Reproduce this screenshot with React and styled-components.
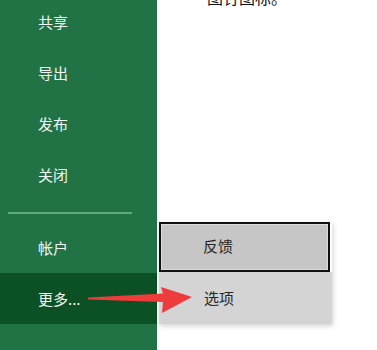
import React from "react";
import styled, { createGlobalStyle } from "styled-components";

const Global = createGlobalStyle`
  html, body { margin: 0; padding: 0; background: #fff; overflow: hidden; }
  body { font-family: "Noto Sans CJK SC", "Noto Sans", sans-serif; }
`;

const Page = styled.div`
  position: relative;
  display: flex;
  width: 377px;
  height: 350px;
  overflow: hidden;
`;

const Sidebar = styled.nav`
  width: 157px;
  flex-shrink: 0;
  background: #217346;
  display: flex;
  flex-direction: column;
`;

const NavList = styled.div`
  display: flex;
  flex-direction: column;
  margin-top: -4px;
`;

const NavItem = styled.div`
  height: 51px;
  display: flex;
  align-items: center;
  padding-left: 38px;
  font-size: 15px;
  color: #f2f7f2;
  background: ${(p) => (p.$active ? "#0b5125" : "transparent")};
`;

const Divider = styled.div`
  height: 1.5px;
  margin: 12px 25px 8px 8px;
  background: #5cab78;
`;

const Main = styled.main`
  flex: 1;
  background: #fff;
  padding-left: 50px;
`;

const Clipped = styled.div`
  margin-top: -12px;
  font-size: 16px;
  color: #111;
  line-height: 19px;
`;

const Popup = styled.div`
  position: absolute;
  left: 159px;
  top: 222px;
  width: 173px;
  display: flex;
  flex-direction: column;
  align-items: flex-start;
  box-shadow: 1px 2px 5px rgba(0, 0, 0, 0.18);
`;

const PopItem = styled.div`
  box-sizing: border-box;
  width: ${(p) => (p.$focused ? "171px" : "173px")};
  height: ${(p) => (p.$focused ? "50px" : "52px")};
  display: flex;
  align-items: center;
  padding-left: ${(p) => (p.$focused ? "42px" : "45px")};
  padding-bottom: ${(p) => (p.$focused ? "4px" : "2px")};
  font-size: 15px;
  color: #262626;
  background: ${(p) => (p.$focused ? "#c6c6c6" : "#d4d4d4")};
  border: ${(p) => (p.$focused ? "2.5px solid #111" : "none")};
  box-shadow: ${(p) => (p.$focused ? "inset 0 0 0 1px #dcdcdc" : "none")};
`;

const ArrowSvg = styled.svg`
  position: absolute;
  left: 0;
  top: 0;
  pointer-events: none;
`;

export default function App() {
  return (
    <>
      <Global />
      <Page>
        <Sidebar>
          <NavList>
            <NavItem>共享</NavItem>
            <NavItem>导出</NavItem>
            <NavItem>发布</NavItem>
            <NavItem>关闭</NavItem>
            <Divider />
            <NavItem>帐户</NavItem>
            <NavItem $active>更多...</NavItem>
          </NavList>
        </Sidebar>
        <Main>
          <Clipped>图钉图标。</Clipped>
        </Main>
        <Popup>
          <PopItem $focused>反馈</PopItem>
          <PopItem>选项</PopItem>
        </Popup>
        <ArrowSvg width="377" height="350" viewBox="0 0 377 350">
          <polygon
            points="88,297.5 163,293.5 161,287 192,297 162,313 163,302 88,299.5"
            fill="#ee3b3b"
          />
        </ArrowSvg>
      </Page>
    </>
  );
}
